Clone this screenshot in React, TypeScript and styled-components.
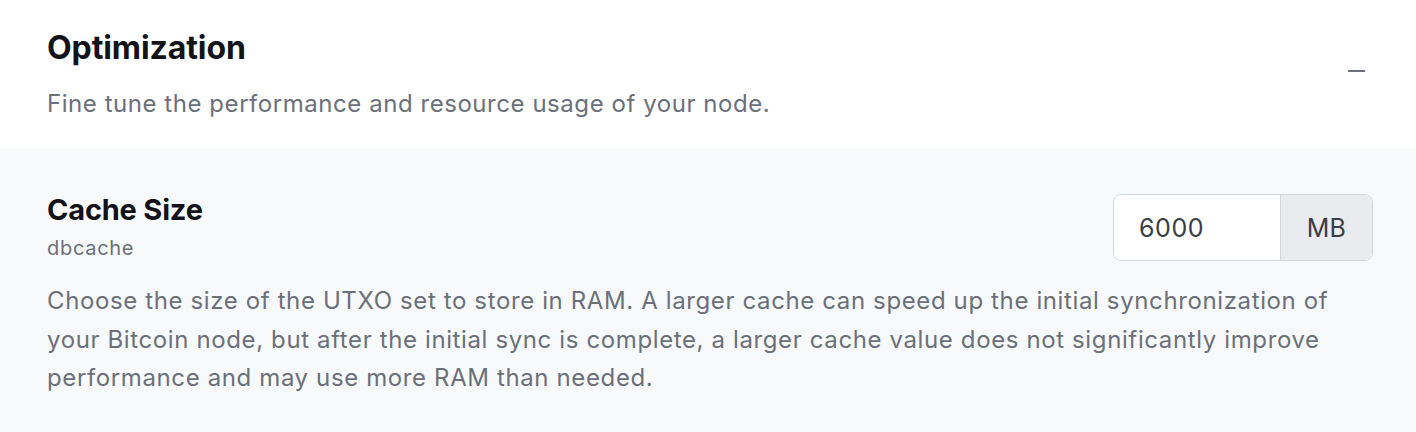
import React from "react";
import styled, { createGlobalStyle } from "styled-components";

const Global = createGlobalStyle`
  html, body { margin: 0; padding: 0; background: #ffffff; }
  body { font-family: Inter, "Noto Sans", sans-serif; -webkit-font-smoothing: antialiased; }
  * { box-sizing: border-box; }
`;

const Card = styled.section`
  width: 1416px;
  height: 432px;
  display: flex;
  flex-direction: column;
  background: #ffffff;
  overflow: hidden;
`;

const Header = styled.header`
  height: 148px;
  display: flex;
  align-items: center;
  justify-content: space-between;
  padding: 0 51px 0 47px;
  background: #ffffff;
`;

const HeaderText = styled.div`
  display: flex;
  flex-direction: column;
  gap: 20px;
`;

const Title = styled.h2`
  margin: 0;
  font-size: 32px;
  line-height: 40px;
  font-weight: 700;
  color: #111318;
  letter-spacing: -0.1px;
`;

const Subtitle = styled.p`
  margin: 0;
  font-size: 24px;
  line-height: 32px;
  color: #6b7079;
  letter-spacing: 0.55px;
`;

const Collapse = styled.span`
  display: block;
  width: 17px;
  height: 2px;
  background: #6b7079;
  margin-top: -6px;
`;

const Body = styled.div`
  flex: 1;
  background: #f8f9fb;
  padding: 44px 43px 0 47px;
  display: flex;
  flex-direction: column;
`;

const SettingRow = styled.div`
  display: flex;
  justify-content: space-between;
  align-items: flex-start;
`;

const SettingLabel = styled.div`
  display: flex;
  flex-direction: column;
  gap: 6px;
`;

const SettingName = styled.h3`
  margin: 0;
  font-size: 29px;
  line-height: 36px;
  font-weight: 700;
  color: #111318;
  letter-spacing: -0.2px;
`;

const SettingKey = styled.span`
  font-size: 20px;
  line-height: 28px;
  color: #6b7079;
  letter-spacing: 0.7px;
`;

const InputGroup = styled.div`
  display: flex;
  width: 260px;
  height: 67px;
  margin-top: 2px;
  border: 1.5px solid #d3d6db;
  border-radius: 8px;
  overflow: hidden;
  background: #ffffff;
`;

const NumberInput = styled.input`
  flex: 1;
  min-width: 0;
  border: none;
  outline: none;
  padding: 0 0 0 25px;
  font-family: inherit;
  font-size: 25px;
  letter-spacing: 0.6px;
  color: #3a3d44;
  background: #ffffff;
`;

const Addon = styled.span`
  width: 92px;
  display: flex;
  align-items: center;
  justify-content: center;
  border-left: 1.5px solid #d3d6db;
  background: #e9ebee;
  font-size: 25px;
  letter-spacing: 0.4px;
  color: #3a3d44;
`;

const Description = styled.p`
  margin: 20px 0 0 0;
  max-width: 1300px;
  font-size: 24px;
  line-height: 38.5px;
  letter-spacing: 0.62px;
  color: #6b7079;
`;

export default function App() {
  return (
    <>
      <Global />
      <Card>
        <Header>
          <HeaderText>
            <Title>Optimization</Title>
            <Subtitle>Fine tune the performance and resource usage of your node.</Subtitle>
          </HeaderText>
          <Collapse aria-label="collapse" />
        </Header>
        <Body>
          <SettingRow>
            <SettingLabel>
              <SettingName>Cache Size</SettingName>
              <SettingKey>dbcache</SettingKey>
            </SettingLabel>
            <InputGroup>
              <NumberInput type="text" defaultValue="6000" />
              <Addon>MB</Addon>
            </InputGroup>
          </SettingRow>
          <Description>
            Choose the size of the UTXO set to store in RAM. A larger cache can speed up the initial synchronization of
            your Bitcoin node, but after the initial sync is complete, a larger cache value does not significantly improve
            performance and may use more RAM than needed.
          </Description>
        </Body>
      </Card>
    </>
  );
}
